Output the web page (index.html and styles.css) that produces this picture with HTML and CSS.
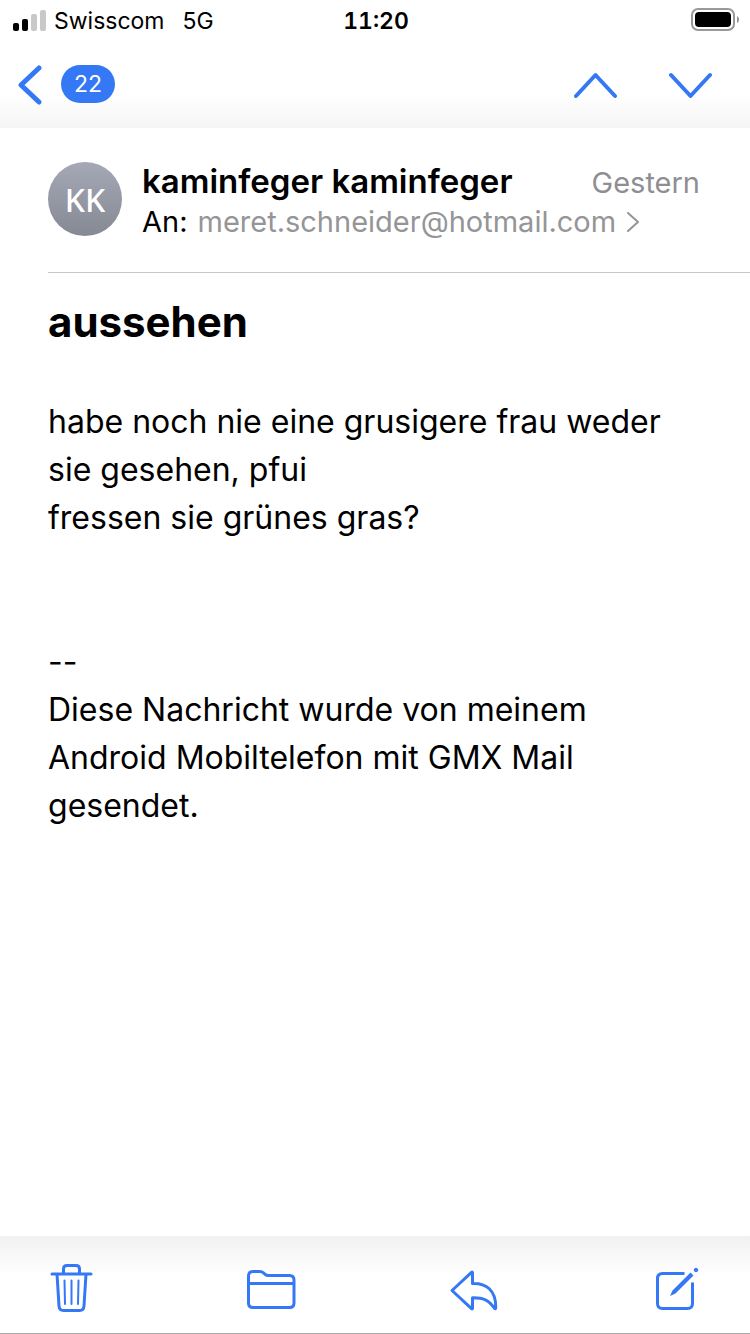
FILE: index.html
```html
<!DOCTYPE html>
<html lang="de">
<head>
<meta charset="utf-8">
<meta name="viewport" content="width=device-width, initial-scale=1">
<title>aussehen</title>
<link rel="stylesheet" href="styles.css">
</head>
<body>
<div class="screen">
  <div class="status">
    <div class="status-side">
      <svg class="signal" width="34" height="24" viewBox="0 0 34 24" aria-hidden="true">
        <rect x="1" y="14" width="6" height="8" rx="2"/>
        <rect x="10" y="10" width="6" height="12" rx="2"/>
        <rect class="signal-off" x="19" y="5" width="6" height="17" rx="2"/>
        <rect class="signal-off" x="28" y="1" width="6" height="21" rx="2"/>
      </svg>
      <span class="carrier">Swisscom</span>
      <span>5G</span>
    </div>
    <time class="clock">11:20</time>
    <div class="status-side status-end">
      <svg width="49" height="26" viewBox="0 0 49 26" aria-hidden="true">
        <rect x="1" y="1" width="42" height="21" rx="6" fill="none" stroke="#999" stroke-width="2"/>
        <rect x="4" y="4" width="36" height="15" rx="4"/>
        <path d="M46 8q2 1 2 3.500t-2 3.500z" fill="#8e8e8e"/>
      </svg>
    </div>
  </div>

  <nav class="nav">
    <button class="back" type="button" aria-label="Zurück, 22 ungelesen">
      <svg width="24" height="40" viewBox="0 0 24 40"><path class="thick" d="M21 3L3 20l18 17"/></svg>
      <span class="count">22</span>
    </button>
    <div class="nav-arrows">
      <button type="button" aria-label="Vorherige Nachricht">
        <svg width="44" height="28" viewBox="0 0 44 28"><path class="medium" d="M2 25L21.500 4 41 25"/></svg>
      </button>
      <button type="button" aria-label="Nächste Nachricht">
        <svg width="44" height="28" viewBox="0 0 44 28"><path class="medium" d="M2 4l19.500 21L41 4"/></svg>
      </button>
    </div>
  </nav>

  <main class="message">
    <header class="head">
      <div class="avatar">KK</div>
      <div class="people">
        <div class="from-row">
          <span class="from">kaminfeger kaminfeger</span>
          <time class="date">Gestern</time>
        </div>
        <div class="to-row">
          <span>An:</span>
          <a class="address" href="#">meret.schneider@hotmail.com
            <svg width="14" height="22" viewBox="0 0 14 22" aria-hidden="true"><path d="M2 2l10 9-10 9" fill="none" stroke="#959598" stroke-width="2" stroke-linecap="round" stroke-linejoin="round"/></svg>
          </a>
        </div>
      </div>
    </header>
    <h1 class="subject">aussehen</h1>
    <div class="text">
      <p>habe noch nie eine grusigere frau weder<br>sie gesehen, pfui<br>fressen sie grünes gras?</p>
      <p class="signature">--<br>Diese Nachricht wurde von meinem<br>Android Mobiltelefon mit GMX Mail<br>gesendet.</p>
    </div>
  </main>

  <footer class="toolbar">
    <button type="button" aria-label="Löschen">
      <svg class="line" width="56" height="56" viewBox="0 0 56 56">
        <path d="M8 14h39M19.500 14V9q0-3.500 3.500-3.500h9q3.500 0 3.500 3.500v5M13 14l2 32q.3 4.500 4.500 4.500h16q4.200 0 4.500-4.500l2-32"/>
        <path class="thin" d="M20.500 20.500l.5 23.500M27.500 20.500V44M34.500 20.500L34 44"/>
      </svg>
    </button>
    <button type="button" aria-label="Verschieben">
      <svg class="line" width="56" height="56" viewBox="0 0 56 56">
        <path d="M2.500 43V16q0-4.500 4.500-4.500h7q2 0 3.500 1.300l1.800 1.700q1.200 1 3 1H43.500q4.500 0 4.500 4.500v23q0 4.500-4.500 4.500h-36.500q-4.500 0-4.500-4.500zM2.500 23.500H48"/>
      </svg>
    </button>
    <button type="button" aria-label="Antworten">
      <svg class="line" width="56" height="56" viewBox="0 0 56 56">
        <path d="M4 30.500L23.500 12.400q1-.8 1 .4v10.700C38 23 48 30 47.800 47.500q-.1 2.300-1.600.5C41 40 35 37.600 24.500 37.800v10.400q0 1.200-1 .4z"/>
      </svg>
    </button>
    <button type="button" aria-label="Neue Nachricht">
      <svg class="line" width="56" height="56" viewBox="0 0 56 56">
        <path class="flat" d="M34.500 13.500H12.500q-5 0-5 5v25q0 5 5 5h25q5 0 5-5V22.500"/>
        <path class="solid" d="M20 36l2.500-5.500L40.500 12.500l3 3L25.500 33.500zM44.500 8.600q1.500-1.500 3 0t0 3-3 0 0-3z"/>
      </svg>
    </button>
  </footer>
</div>
</body>
</html>
```
FILE: styles.css
```css
* {
  box-sizing: border-box;
}

body {
  margin: 0;
  background: #fff;
  color: #000;
  font-family: Inter, "Liberation Sans", sans-serif;
}

button {
  display: flex;
  align-items: center;
  padding: 0;
  border: 0;
  background: none;
  color: inherit;
  font: inherit;
  cursor: pointer;
}

svg {
  display: block;
  flex: none;
}

.screen {
  display: flex;
  flex-direction: column;
  min-height: 100vh;
}

.status {
  display: flex;
  align-items: center;
  height: 42px;
  padding: 0 10px 0 12px;
  font-size: 23px;
}

.status-side {
  display: flex;
  flex: 1;
  align-items: center;
}

.status-end {
  justify-content: flex-end;
}

.signal {
  margin-right: 8px;
}

.signal-off {
  fill: #c8c8c8;
}

.carrier {
  margin-right: 18px;
}

.clock {
  font-weight: 600;
  font-variant-numeric: tabular-nums;
}

.nav {
  display: flex;
  align-items: center;
  justify-content: space-between;
  height: 86px;
  padding: 0 37px 0 18px;
  background: linear-gradient(#fff 60%, #f5f5f5);
}

.back {
  align-items: flex-start;
  gap: 19px;
}

.count {
  padding: 0 13px;
  border-radius: 19px;
  background: #3478f6;
  color: #fff;
  font-size: 23px;
  line-height: 38px;
}

.nav-arrows {
  display: flex;
  gap: 51px;
}

.thick,
.medium,
.line {
  fill: none;
  stroke: #3478f6;
  stroke-linecap: round;
  stroke-linejoin: round;
}

.thick {
  stroke-width: 5px;
}

.medium {
  stroke-width: 4px;
}

.message {
  flex: 1;
  padding-left: 48px;
}

.head {
  display: flex;
  gap: 20px;
  padding: 34px 50px 30px 0;
  border-bottom: 1px solid #c6c6c8;
}

.avatar {
  width: 74px;
  height: 74px;
  border-radius: 50%;
  background: linear-gradient(#a5a9b6, #858993);
  color: #fff;
  font-family: "Noto Sans", sans-serif;
  font-size: 32px;
  font-weight: 500;
  line-height: 76px;
  text-align: center;
}

.people {
  flex: 1;
}

.from-row {
  display: flex;
  align-items: baseline;
  justify-content: space-between;
  line-height: 38px;
}

.from {
  font-size: 33px;
  font-weight: 600;
}

.date {
  color: #8e8e93;
  font-size: 29px;
}

.to-row {
  display: flex;
  gap: 10px;
  font-size: 29px;
  line-height: 40px;
}

.address {
  display: flex;
  align-items: center;
  gap: 10px;
  color: #959598;
  text-decoration: none;
}

.subject {
  margin: 23px 0 0;
  font-size: 42px;
  font-weight: 700;
  line-height: 52px;
}

.text {
  padding: 50px 48px 48px 0;
  font-size: 32px;
  line-height: 48px;
}

.text p {
  margin: 0;
}

.text .signature {
  margin-top: 96px;
}

.toolbar {
  display: flex;
  align-items: flex-start;
  justify-content: space-between;
  height: 98px;
  padding: 24px 44px 0;
  border-bottom: 1px solid #a8a8a8;
  background: linear-gradient(#f1f1f1, #fff 40%);
}

.line {
  stroke-width: 3px;
}

.thin {
  stroke-width: 2px;
}

.flat {
  stroke-linecap: butt;
}

.solid {
  fill: #3478f6;
  stroke: none;
}
```
